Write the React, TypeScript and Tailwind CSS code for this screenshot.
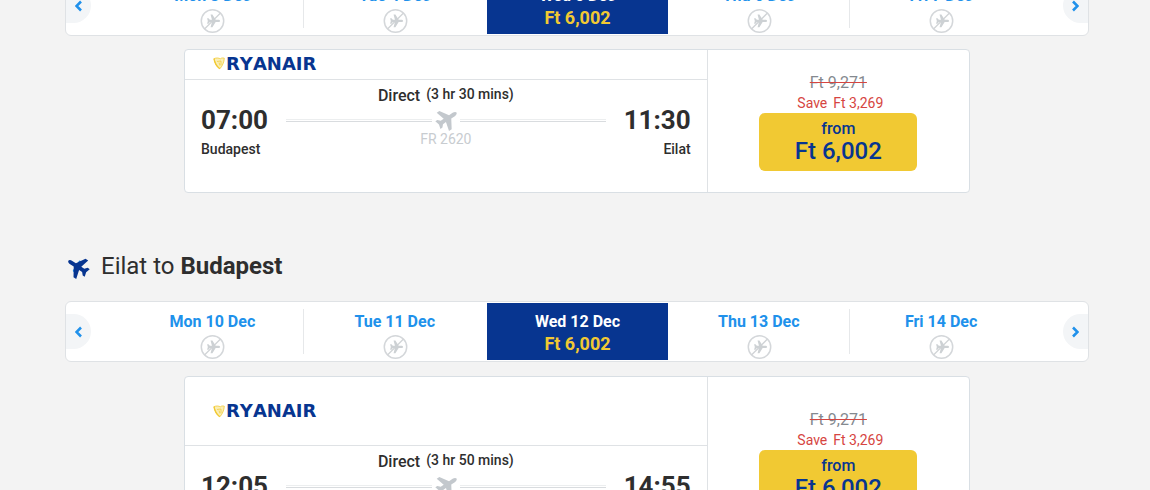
import clsx from "clsx";

type Leg = {
  days: string[];
  from: string;
  to: string;
  departs: string;
  arrives: string;
  duration: string;
  flight: string;
  tall?: boolean;
};

const outbound: Leg = {
  days: ["Mon 3 Dec", "Tue 4 Dec", "Wed 5 Dec", "Thu 6 Dec", "Fri 7 Dec"],
  from: "Budapest",
  to: "Eilat",
  departs: "07:00",
  arrives: "11:30",
  duration: "3 hr 30 mins",
  flight: "FR 2620",
};

const inbound: Leg = {
  days: ["Mon 10 Dec", "Tue 11 Dec", "Wed 12 Dec", "Thu 13 Dec", "Fri 14 Dec"],
  from: "Eilat",
  to: "Budapest",
  departs: "12:05",
  arrives: "14:55",
  duration: "3 hr 50 mins",
  flight: "FR 2621",
  tall: true,
};

const PLANE =
  "M23.5 12c0-1.1-1.6-2-3.4-2H15.8L10.2 1H7l2.4 9H5.8L3.4 7.4H1L2.3 12 1 16.6h2.4L5.8 14h3.6L7 23h3.2l5.600-9h4.300c1.800 0 3.400-.9 3.400-2z";

function FlightIcon() {
  return (
    <svg viewBox="0 0 24 24" className="h-6 w-6 shrink-0 fill-[#c3c8cd]" aria-hidden="true">
      <path d={PLANE} transform="translate(1 -1) rotate(-34 12 12)" />
    </svg>
  );
}

function ReturnIcon() {
  return (
    <svg viewBox="0 0 26 26" className="h-[26px] w-[26px] shrink-0" aria-hidden="true">
      <g transform="translate(0 2) rotate(-147 12 12)">
        <circle cx="13" cy="7" r="1.6" fill="#2091eb" />
        <circle cx="13" cy="17" r="1.6" fill="#2091eb" />
        <path d={PLANE} fill="#073590" />
      </g>
    </svg>
  );
}

function NoFlightIcon() {
  return (
    <svg viewBox="0 0 26 26" className="mt-px h-[26px] w-[26px] shrink-0" role="img" aria-label="No flights">
      <circle cx="13.5" cy="13" r="11.2" fill="none" stroke="#d4d7da" strokeWidth="1.5" />
      <path d="M5.5 21 21.5 5" stroke="#d0d3d6" strokeWidth="1.3" />
      <path d={PLANE} fill="#cdd1d4" transform="translate(7.5 6) scale(0.58)" />
    </svg>
  );
}

function Chevron({ flip }: { flip?: boolean }) {
  return (
    <svg viewBox="0 0 8 12" className="h-3 w-2" fill="none" stroke="#2091eb" strokeWidth="2.6">
      <path d={flip ? "M2 1.5 6.5 6 2 10.5" : "M6 1.5 1.5 6 6 10.5"} />
    </svg>
  );
}

function Logo() {
  return (
    <div className="flex items-center gap-px">
      <svg viewBox="0 0 12 13" className="h-[13px] w-3" fill="none" stroke="#f1c933" aria-hidden="true">
        <path
          d="M1 1.6c2.5-1 5-.6 6.3.2 1.2-1 2.6-1 4-.6-.2 4-2 8-4.5 10.6C4 10 2 6.5 1 1.6z"
          fill="#faeeb5"
          strokeWidth=".8"
        />
        <path d="M1 1.6c.6 4.400 3 8 5.800 10.200" strokeWidth="1.3" />
        <path d="M4 4.5c1.500 0 2.500-.6 4-.5M6 5.500l1 3M8 4v4" strokeWidth=".7" />
      </svg>
      <span className="font-['DejaVu_Sans',sans-serif] text-lg leading-4 font-bold text-[#073590] [font-kerning:none]">
        RYANAIR
      </span>
    </div>
  );
}

function DateBar({ days }: { days: string[] }) {
  return (
    <div className="flex h-[61px] items-stretch rounded-md border border-[#dfe2e5] bg-white">
      <div className="flex w-14 items-center">
        <button
          aria-label="Earlier dates"
          className="flex h-[35px] w-[25px] items-center justify-center rounded-r-full bg-[#f3f5f7]"
        >
          <Chevron />
        </button>
      </div>
      {days.map((day, i) => (
        <div key={day} className={clsx("min-w-0 flex-1", i === 2 ? "py-px pl-px" : "py-[7px]")}>
          <button
            className={clsx(
              "flex h-full w-full flex-col items-center",
              i === 2 ? "bg-[#073590] pt-[7px]" : "pt-px",
              (i === 0 || i === 3) && "border-r border-[#e6e8ea]",
            )}
          >
            <span
              className={clsx("text-base leading-[23px] font-bold", i === 2 ? "text-white" : "text-[#2091eb]")}
            >
              {day}
            </span>
            {i === 2 ? (
              <span className="text-lg leading-[22px] font-bold text-[#f1c933]">Ft 6,002</span>
            ) : (
              <NoFlightIcon />
            )}
          </button>
        </div>
      ))}
      <div className="flex w-14 items-center justify-end">
        <button
          aria-label="Later dates"
          className="flex h-[35px] w-[25px] items-center justify-center rounded-l-full bg-[#f3f5f7]"
        >
          <Chevron flip />
        </button>
      </div>
    </div>
  );
}

function FlightCard({ leg }: { leg: Leg }) {
  return (
    <div className="mx-[119px] flex rounded border border-[#d9dfe4] bg-white">
      <div className="w-2/3 border-r border-[#dfe2e5]">
        <div
          className={clsx(
            "flex items-center border-b border-[#dfe2e5] pl-7",
            leg.tall ? "h-[69px]" : "h-[30px] pb-0.5",
          )}
        >
          <Logo />
        </div>
        <div className="flex h-28 items-start justify-between px-4">
          <div className="pt-[26px]">
            <div className="text-[26px] leading-7 font-bold">{leg.departs}</div>
            <div className="mt-[5px] text-sm font-medium">{leg.from}</div>
          </div>
          <div className="mx-[18px] flex flex-1 flex-col items-center pt-1">
            <div className="flex gap-[6px] font-medium">
              <span className="text-base leading-6">Direct</span>
              <span className="text-sm leading-5">({leg.duration})</span>
            </div>
            <div className="flex w-full items-center gap-0.5">
              <div className="h-[3px] flex-1 border-y border-t-[#eceeef] border-b-[#d9dcdf]" />
              <FlightIcon />
              <div className="h-[3px] flex-1 border-y border-t-[#eceeef] border-b-[#d9dcdf]" />
            </div>
            <div className="pt-px text-sm leading-3 text-[#c8ccd0]">{leg.flight}</div>
          </div>
          <div className="pt-[26px] text-right">
            <div className="text-[26px] leading-7 font-bold">{leg.arrives}</div>
            <div className="mt-[5px] text-sm font-medium">{leg.to}</div>
          </div>
        </div>
      </div>
      <div className={clsx("flex flex-1 flex-col items-center", leg.tall ? "pt-[33px]" : "pt-[23px]")}>
        <s className="text-base leading-5 text-[#84898f] decoration-[#d64541]">Ft 9,271</s>
        <div className="flex gap-[6px] pl-1 text-sm text-[#d64541]">
          <span>Save</span>
          <span>Ft 3,269</span>
        </div>
        <button className="flex h-[58px] w-[158px] flex-col items-center rounded-md bg-[#f1c933] pt-[6px] font-medium text-[#073590]">
          <span className="text-base leading-5">from</span>
          <span className="text-2xl leading-6">Ft 6,002</span>
        </button>
      </div>
    </div>
  );
}

export default function App() {
  return (
    <main className="h-screen overflow-hidden bg-[#f3f3f3] pr-[61px] pl-[65px] font-[Roboto,sans-serif] text-[#2e2e2e]">
      <section className="-mt-[25px] flex flex-col gap-[13px]">
        <DateBar days={outbound.days} />
        <FlightCard leg={outbound} />
      </section>
      <section className="mt-[57px]">
        <h2 className="mb-[19px] flex items-center gap-[9px] pl-px text-2xl font-normal">
          <ReturnIcon />
          <span>
            {inbound.from} to <b className="font-bold">{inbound.to}</b>
          </span>
        </h2>
        <div className="flex flex-col gap-3.5">
          <DateBar days={inbound.days} />
          <FlightCard leg={inbound} />
        </div>
      </section>
    </main>
  );
}
